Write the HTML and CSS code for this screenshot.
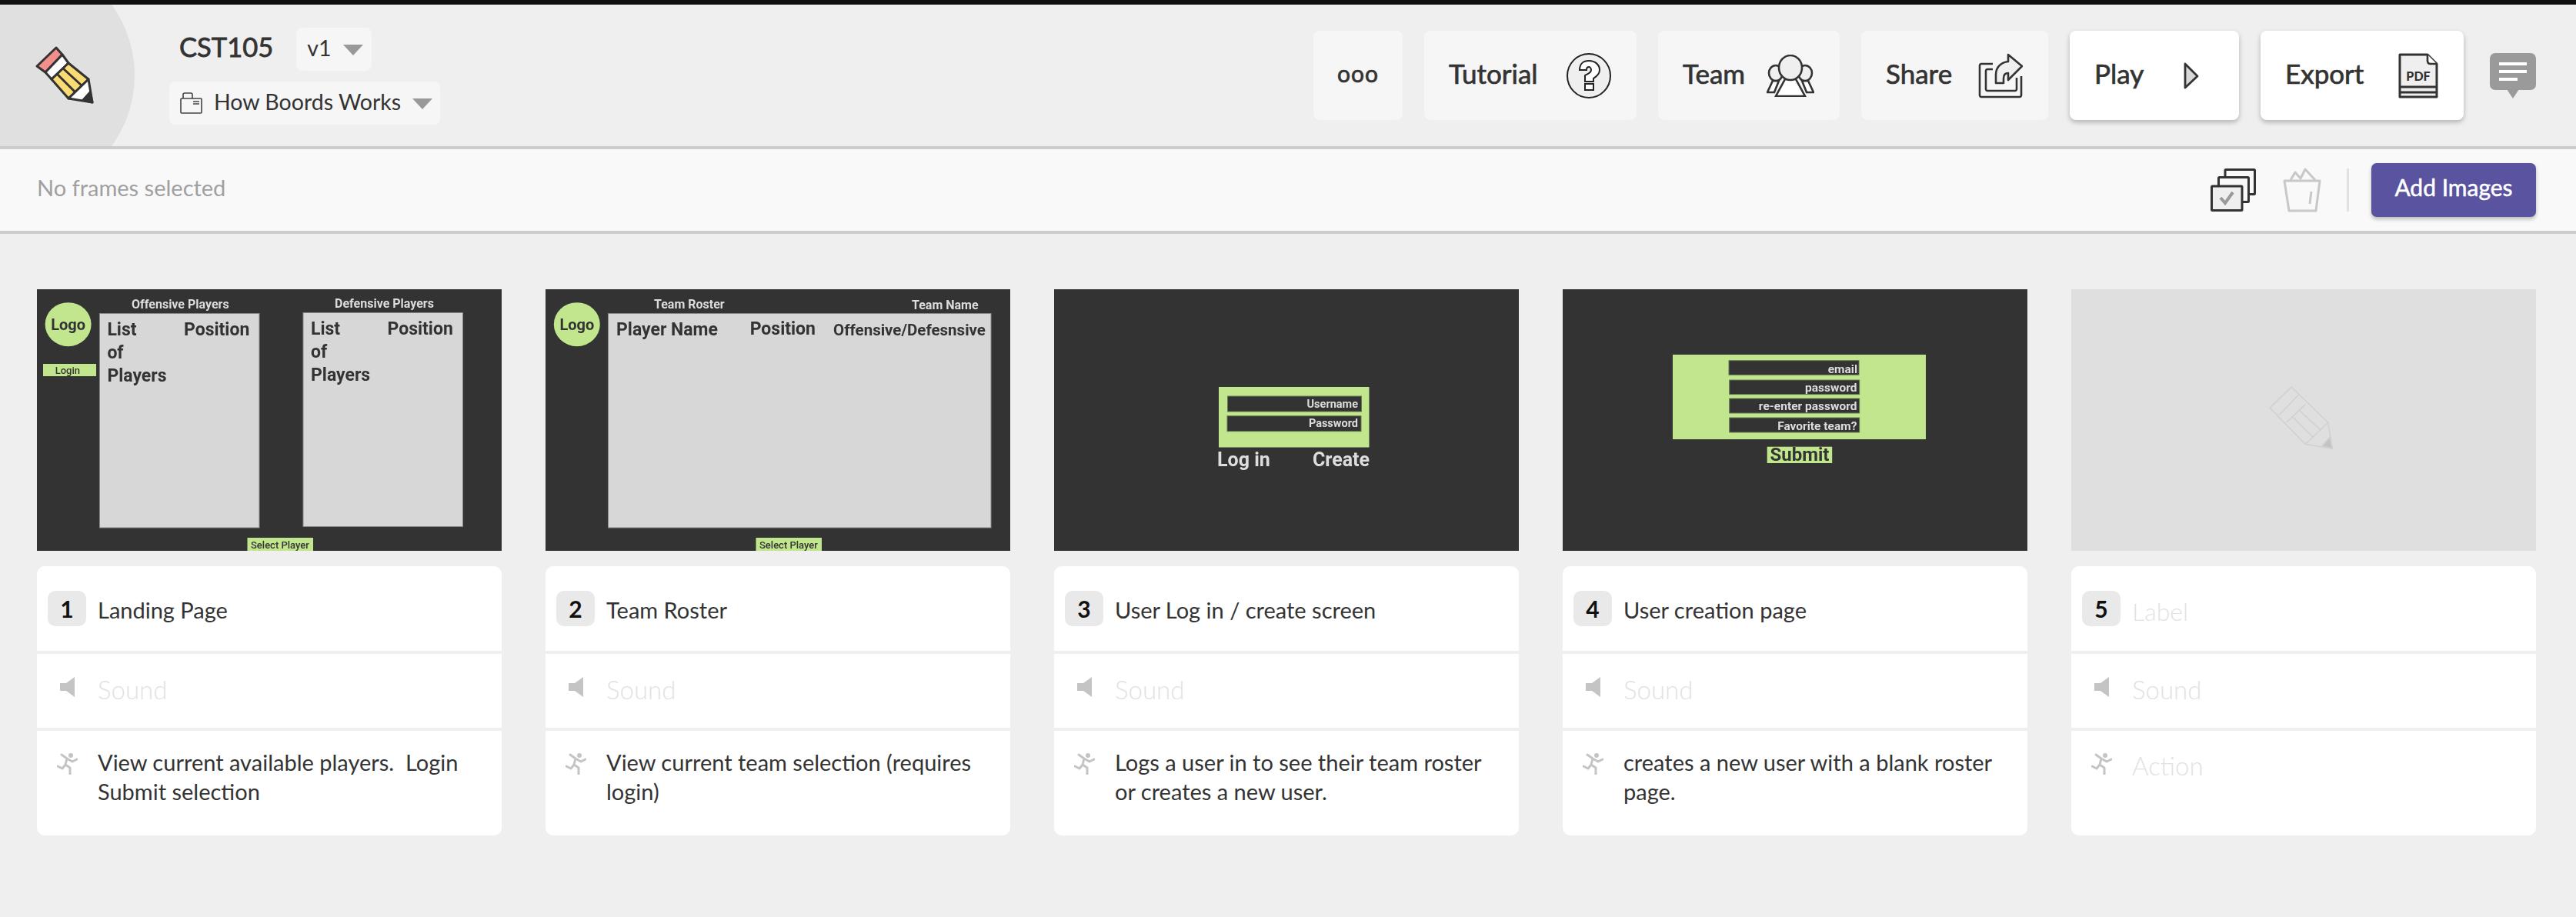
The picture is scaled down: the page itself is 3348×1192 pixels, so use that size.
FILE: index.html
```html
<!DOCTYPE html>
<html lang="en">
<head>
  <meta charset="UTF-8" />
  <title>CST105 - Boords</title>
  <link rel="stylesheet" href="styles.css">
</head>
<body>

<div class="top-line"></div>

<header class="app-header">
  <div class="header-left">
    <svg class="logo" width="175" height="184" viewBox="0 0 175 184">
      <circle cx="19" cy="92" r="156" fill="#e0e0e0"/>
      <g transform="translate(48 56)" stroke="#333" stroke-width="3" stroke-linejoin="round">
        <path d="M25 0 L33 9 L11 32 L0 24 Z" fill="#f28e8c"/>
        <path d="M33 9 L41 20 L19 41 L11 32 Z" fill="#fff"/>
        <path d="M41 20 L67 41 L41 66 L19 41 Z" fill="#fbdb74"/>
        <path d="M34 27 L58 49 M26 34 L50 58" fill="none"/>
        <path d="M67 41 L72 71 L41 66 Z" fill="#fff"/>
        <path d="M60 68 L69 58 L72 71 Z" fill="#333"/>
      </g>
    </svg>
    <div class="project">
      <div class="title-row">
        <span class="project-name">CST105</span>
        <div class="pill version-pill">
          <span class="pill-text">v1</span>
          <span class="caret"></span>
        </div>
      </div>
      <div class="pill folder-pill">
        <svg width="29" height="28" viewBox="0 0 29 28" fill="none" stroke="#444" stroke-width="1.6">
          <rect x="1" y="8" width="27" height="19" rx="1"/>
          <path d="M4 8 V3 Q4 1 6 1 H14 Q16 1 16 3 V8"/>
          <path d="M17 12 H25 M17 15 H25"/>
        </svg>
        <span class="pill-text">How Boords Works</span>
        <span class="caret"></span>
      </div>
    </div>
  </div>

  <div class="header-right">
    <button class="btn btn-more"><span class="btn-text">ooo</span></button>
    <button class="btn btn-tutorial">
      <span class="btn-text">Tutorial</span>
      <svg width="58" height="59" viewBox="0 0 58 59" stroke="#222" stroke-width="2">
        <ellipse cx="29" cy="29.5" rx="28" ry="28.5" fill="#efefef"/>
        <path d="M17 22 C17 14 22 10 29 10 C37 10 43 15 43 22 C43 28 38 31 35 33 L35 37 H24 L24 29 C27 27 32 26 32 22 C32 19 30 18 29 18 C27 18 26 20 26 22 Z" fill="#fff"/>
        <rect x="24" y="40" width="11" height="8" fill="#fff"/>
      </svg>
    </button>
    <button class="btn btn-team">
      <span class="btn-text">Team</span>
      <svg width="62" height="55" viewBox="0 0 62 55" stroke="#333" stroke-width="2.6" fill="#fff">
        <path d="M8 34 L16 34 L10 49 L1 49 Z M54 34 L46 34 L52 49 L61 49 Z"/>
        <ellipse cx="12" cy="24" rx="9" ry="10" fill="#efefef"/>
        <ellipse cx="50" cy="24" rx="9" ry="10" fill="#efefef"/>
        <path d="M24 32 L38 32 L50 54 L12 54 Z"/>
        <ellipse cx="31" cy="17" rx="15" ry="16" fill="#efefef"/>
      </svg>
    </button>
    <button class="btn btn-share">
      <span class="btn-text">Share</span>
      <svg width="58" height="59" viewBox="0 0 58 59" stroke="#333" stroke-width="2.6" fill="none" stroke-linejoin="round">
        <path d="M19 14 H4 C3 14 2 15 2 16 V55 C2 56 3 57 4 57 H54 C55 57 56 56 56 55 V30"/>
        <path d="M19 21 H12 C11 21 10 22 10 23 V47 C10 48 11 49 12 49 H48 C49 49 50 48 50 47 V32"/>
        <path d="M39 2 L57 17 L39 35 V26 C34 26 33 29 33 33 V39 H23 V28 C23 18 30 12 39 11 Z" fill="#efefef"/>
      </svg>
    </button>
    <button class="btn btn-raised btn-play">
      <span class="btn-text">Play</span>
      <svg width="20" height="35" viewBox="0 0 20 35">
        <path d="M2 2 L18 18 L2 33 Z" fill="#d8d8d8" stroke="#333" stroke-width="2.8" stroke-linejoin="round"/>
      </svg>
    </button>
    <button class="btn btn-raised btn-export">
      <span class="btn-text">Export</span>
      <svg width="52" height="59" viewBox="0 0 52 59">
        <path d="M2 2 H38 L50 14 V57 H2 Z" fill="#efefef" stroke="#333" stroke-width="3" stroke-linejoin="round"/>
        <path d="M38 2 V10 Q38 14 42 14 H50" fill="#fff" stroke="#333" stroke-width="2.6"/>
        <path d="M2 44 H50 M2 51 H50" stroke="#333" stroke-width="3"/>
        <text class="pdf-text" x="26" y="36" text-anchor="middle">PDF</text>
      </svg>
    </button>
    <svg class="comment-icon" width="60" height="59" viewBox="0 0 60 59">
      <rect width="60" height="48" rx="7" fill="#9a9a9a"/>
      <path d="M22 47 H38 L30 59 Z" fill="#9a9a9a"/>
      <path d="M12 12 H48 V16 H12 Z M12 22 H48 V26 H12 Z M12 32 H36 V36 H12 Z" fill="#fff"/>
    </svg>
  </div>
</header>

<div class="toolbar">
  <span class="no-frames">No frames selected</span>
  <div class="toolbar-right">
    <svg width="59" height="56" viewBox="0 0 59 56" stroke="#333" stroke-width="3" fill="#f9f9f9">
      <rect x="19" y="1.5" width="38.500" height="32" rx="1"/>
      <rect x="10.500" y="11.500" width="39" height="32" rx="1"/>
      <rect x="1.500" y="23" width="39.500" height="31.500" rx="1" fill="#efefef"/>
      <path d="M13 38 L19 45 L29 31" fill="none" stroke="#999" stroke-width="4"/>
    </svg>
    <svg class="trash-icon" width="50" height="58" viewBox="0 0 50 58" stroke="#c8c8c8" stroke-width="3" fill="none" stroke-linejoin="round">
      <path d="M2 17 H48 L43 56 H8 Z"/>
      <path d="M10 16 L16 6 L23 14 L29 2 L42 16"/>
      <path d="M37 31 L35 47"/>
    </svg>
    <div class="toolbar-divider"></div>
    <button class="add-images"><span class="add-images-text">Add Images</span></button>
  </div>
</div>

<main class="frames">

  <section class="frame">
    <svg class="thumb" viewBox="0 0 604 340">
      <rect width="604" height="340" fill="#333"/>
      <ellipse class="t-green" cx="40.600" cy="45.700" rx="30" ry="28.500"/>
      <text class="t-logo" x="40.600" y="53" text-anchor="middle">Logo</text>
      <rect class="t-green" x="8" y="97" width="69" height="16"/>
      <text class="t-small" x="23.700" y="110">Login</text>
      <text class="t-head" x="123" y="24.700">Offensive Players</text>
      <rect class="t-box" x="81.500" y="31.500" width="207.500" height="278.500"/>
      <text class="t-big" x="91.400" y="60">List</text>
      <text class="t-big" x="191" y="60">Position</text>
      <text class="t-big" x="91.400" y="90">of</text>
      <text class="t-big" x="91.400" y="120">Players</text>
      <text class="t-head" x="387" y="24">Defensive Players</text>
      <rect class="t-box" x="346" y="30.500" width="207.500" height="278"/>
      <text class="t-big" x="356" y="58.700">List</text>
      <text class="t-big" x="455.500" y="58.700">Position</text>
      <text class="t-big" x="356" y="88.700">of</text>
      <text class="t-big" x="356" y="118.700">Players</text>
      <rect class="t-green" x="273.500" y="323" width="85.500" height="17"/>
      <text class="t-small" x="278" y="337">Select Player</text>
    </svg>
    <div class="frame-card">
      <div class="row row-label"><span class="badge">1</span><span class="row-text">Landing Page</span></div>
      <div class="row row-sound"><span class="row-icon"><svg class="speaker" width="19" height="26" viewBox="0 0 19 26"><path d="M0 8 H8 L19 0 V26 L8 18 H0 Z"/></svg></span><span class="placeholder">Sound</span></div>
      <div class="row row-action"><span class="row-icon"><svg class="runner" width="27" height="29" viewBox="0 0 27 29"><circle cx="18" cy="4" r="3"/><path d="M6 3 L13 8 L20 12 L26 9 M13 8 L11 16 L17 20 L17 28 M11 16 L7 21 L1 18"/></svg></span><p>View current available players.&nbsp; Login Submit selection</p></div>
    </div>
  </section>

  <section class="frame">
    <svg class="thumb" viewBox="0 0 604 340">
      <rect width="604" height="340" fill="#333"/>
      <ellipse class="t-green" cx="40.800" cy="45.700" rx="30" ry="28.500"/>
      <text class="t-logo" x="40.800" y="53" text-anchor="middle">Logo</text>
      <text class="t-head" x="141" y="24.700">Team Roster</text>
      <text class="t-head" x="476" y="26">Team Name</text>
      <rect class="t-box" x="81.500" y="31.500" width="497.500" height="278.500"/>
      <text class="t-big" x="92" y="60">Player Name</text>
      <text class="t-big" x="265.700" y="59">Position</text>
      <text class="t-big t-narrow" x="374" y="60">Offensive/Defesnsive</text>
      <rect class="t-green" x="273.500" y="323" width="85.500" height="17"/>
      <text class="t-small" x="278" y="337">Select Player</text>
    </svg>
    <div class="frame-card">
      <div class="row row-label"><span class="badge">2</span><span class="row-text">Team Roster</span></div>
      <div class="row row-sound"><span class="row-icon"><svg class="speaker" width="19" height="26" viewBox="0 0 19 26"><path d="M0 8 H8 L19 0 V26 L8 18 H0 Z"/></svg></span><span class="placeholder">Sound</span></div>
      <div class="row row-action"><span class="row-icon"><svg class="runner" width="27" height="29" viewBox="0 0 27 29"><circle cx="18" cy="4" r="3"/><path d="M6 3 L13 8 L20 12 L26 9 M13 8 L11 16 L17 20 L17 28 M11 16 L7 21 L1 18"/></svg></span><p>View current team selection (requires login)</p></div>
    </div>
  </section>

  <section class="frame">
    <svg class="thumb" viewBox="0 0 604 340">
      <rect width="604" height="340" fill="#333"/>
      <rect class="t-green" x="214" y="127" width="195.500" height="78.500"/>
      <rect class="t-field" x="225.500" y="139" width="174" height="20"/>
      <text class="t-input" x="395" y="154" text-anchor="end">Username</text>
      <rect class="t-field" x="225" y="164.700" width="174" height="20"/>
      <text class="t-input" x="395" y="179" text-anchor="end">Password</text>
      <text class="t-link" x="212" y="230">Log in</text>
      <text class="t-link" x="410" y="230" text-anchor="end">Create</text>
    </svg>
    <div class="frame-card">
      <div class="row row-label"><span class="badge">3</span><span class="row-text">User Log in / create screen</span></div>
      <div class="row row-sound"><span class="row-icon"><svg class="speaker" width="19" height="26" viewBox="0 0 19 26"><path d="M0 8 H8 L19 0 V26 L8 18 H0 Z"/></svg></span><span class="placeholder">Sound</span></div>
      <div class="row row-action"><span class="row-icon"><svg class="runner" width="27" height="29" viewBox="0 0 27 29"><circle cx="18" cy="4" r="3"/><path d="M6 3 L13 8 L20 12 L26 9 M13 8 L11 16 L17 20 L17 28 M11 16 L7 21 L1 18"/></svg></span><p>Logs a user in to see their team roster or creates a new user.</p></div>
    </div>
  </section>

  <section class="frame">
    <svg class="thumb" viewBox="0 0 604 340">
      <rect width="604" height="340" fill="#333"/>
      <rect class="t-green" x="143" y="85" width="329" height="110"/>
      <rect class="t-field" x="216" y="92.700" width="169" height="18.600"/>
      <text class="t-form" x="383" y="109" text-anchor="end">email</text>
      <rect class="t-field" x="216.700" y="118" width="169" height="18.700"/>
      <text class="t-form" x="382.400" y="133" text-anchor="end">password</text>
      <rect class="t-field" x="216.700" y="142" width="169" height="19"/>
      <text class="t-form" x="382.400" y="157" text-anchor="end">re-enter password</text>
      <rect class="t-field" x="216.700" y="167" width="169" height="19"/>
      <text class="t-form" x="382.400" y="182.700" text-anchor="end">Favorite team?</text>
      <rect class="t-green" x="265.700" y="204.700" width="84.500" height="21.300"/>
      <text class="t-submit" x="308" y="223" text-anchor="middle">Submit</text>
    </svg>
    <div class="frame-card">
      <div class="row row-label"><span class="badge">4</span><span class="row-text">User creation page</span></div>
      <div class="row row-sound"><span class="row-icon"><svg class="speaker" width="19" height="26" viewBox="0 0 19 26"><path d="M0 8 H8 L19 0 V26 L8 18 H0 Z"/></svg></span><span class="placeholder">Sound</span></div>
      <div class="row row-action"><span class="row-icon"><svg class="runner" width="27" height="29" viewBox="0 0 27 29"><circle cx="18" cy="4" r="3"/><path d="M6 3 L13 8 L20 12 L26 9 M13 8 L11 16 L17 20 L17 28 M11 16 L7 21 L1 18"/></svg></span><p>creates a new user with a blank roster page.</p></div>
    </div>
  </section>

  <section class="frame">
    <svg class="thumb" viewBox="0 0 604 340">
      <rect width="604" height="340" fill="#dfdfdf"/>
      <g transform="translate(258 127) scale(1.130)" fill="none" stroke="#d0d0d0" stroke-width="1.300" stroke-linejoin="round">
        <path d="M25 0 L67 41 L72 71 L41 66 L0 24 Z"/>
        <path d="M33 9 L11 32 M41 20 L19 41 M34 27 L58 49 M26 34 L50 58 M67 41 L41 66"/>
        <path d="M60 68 L69 58 L72 71 Z" fill="#c4c4c4"/>
      </g>
    </svg>
    <div class="frame-card">
      <div class="row row-label"><span class="badge">5</span><span class="row-text placeholder">Label</span></div>
      <div class="row row-sound"><span class="row-icon"><svg class="speaker" width="19" height="26" viewBox="0 0 19 26"><path d="M0 8 H8 L19 0 V26 L8 18 H0 Z"/></svg></span><span class="placeholder">Sound</span></div>
      <div class="row row-action"><span class="row-icon"><svg class="runner" width="27" height="29" viewBox="0 0 27 29"><circle cx="18" cy="4" r="3"/><path d="M6 3 L13 8 L20 12 L26 9 M13 8 L11 16 L17 20 L17 28 M11 16 L7 21 L1 18"/></svg></span><p class="placeholder">Action</p></div>
    </div>
  </section>

</main>

</body>
</html>
```

FILE: styles.css
```css
* {
  box-sizing: border-box;
}

body {
  margin: 0;
  background-color: #efefef;
  font-family: 'Lato', sans-serif;
  color: #333;
  font-size: 29px;
}

.top-line {
  height: 6px;
  background-color: #111;
}

/* header */

.app-header {
  display: flex;
  justify-content: space-between;
  align-items: center;
  height: 188px;
  padding-right: 52px;
  border-bottom: 4px solid #ccc;
}

.header-left {
  display: flex;
  align-self: flex-start;
}

.logo {
  display: block;
}

.project {
  margin-left: 45px;
  padding-top: 30px;
}

.title-row {
  display: flex;
  align-items: center;
  padding-left: 13px;
  gap: 30px;
  margin-bottom: 14px;
}

.project-name {
  font-size: 34.500px;
  font-weight: 400;
  -webkit-text-stroke: 0.8px #333;
  margin-top: -8px;
}

.pill {
  display: flex;
  align-items: center;
  height: 56px;
  background-color: #f6f6f6;
  border-radius: 8px;
  font-size: 28.500px;
}

.pill-text {
  margin-top: -4px;
}

.version-pill {
  width: 98px;
  padding-left: 14px;
  gap: 16px;
}

.folder-pill {
  width: 352px;
  padding-left: 14px;
  gap: 15px;
}

.caret {
  width: 0;
  height: 0;
  border-left: 13px solid transparent;
  border-right: 13px solid transparent;
  border-top: 14px solid #999;
  margin-top: 2px;
}

.header-right {
  display: flex;
  align-items: center;
  gap: 28px;
}

.btn {
  display: flex;
  align-items: center;
  justify-content: space-between;
  height: 116px;
  padding: 0 33px 0 32px;
  background-color: #f6f6f6;
  border: none;
  border-radius: 8px;
  font-family: inherit;
  font-size: 35px;
  font-weight: 400;
  color: #333;
}

.btn-text {
  margin-top: -6px;
  -webkit-text-stroke: 0.7px #333;
}

.btn-raised {
  background-color: #fff;
  box-shadow: 0 3px 6px rgba(0, 0, 0, 0.25);
}

.btn-more {
  width: 116px;
  justify-content: center;
  padding: 0;
  font-size: 30px;
  letter-spacing: 1px;
}

.btn-tutorial { width: 276px; }
.btn-team { width: 236px; }
.btn-share { width: 243px; }
.btn-play { width: 220px; padding-right: 52px; }
.btn-export { width: 264px; }

.pdf-text {
  font-size: 16px;
  font-weight: 900;
  fill: #333;
}

.comment-icon {
  margin-left: 6px;
}

/* toolbar */

.toolbar {
  display: flex;
  justify-content: space-between;
  align-items: center;
  height: 110px;
  padding: 0 52px 0 48px;
  background-color: #f9f9f9;
  border-bottom: 4px solid #ccc;
}

.no-frames {
  color: #a0a0a0;
  margin-top: -7px;
}

.toolbar-right {
  display: flex;
  align-items: center;
}

.trash-icon {
  margin-left: 35px;
}

.toolbar-divider {
  width: 3px;
  height: 56px;
  margin: 0 29px 0 33px;
  background-color: #e2e2e2;
}

.add-images {
  width: 214px;
  height: 70px;
  background-color: #5a539f;
  color: #fff;
  border: none;
  border-radius: 7px;
  font-family: inherit;
  font-size: 30px;
  font-weight: 400;
  box-shadow: 0 3px 5px rgba(0, 0, 0, 0.25);
}

.add-images-text {
  position: relative;
  top: -4px;
  -webkit-text-stroke: 0.5px #fff;
}

/* frames */

.frames {
  display: grid;
  grid-template-columns: repeat(5, 604px);
  column-gap: 57px;
  padding: 72px 0 0 48px;
}

.thumb {
  display: block;
  width: 604px;
  height: 340px;
  margin-bottom: 20px;
  filter: blur(0.4px);
}

.frame-card {
  display: flex;
  flex-direction: column;
  gap: 4px;
  border-radius: 10px;
  overflow: hidden;
}

.row {
  display: flex;
  background-color: #fff;
  padding-left: 14px;
  gap: 15px;
}

.row-label {
  height: 110px;
  align-items: center;
}

.row-text {
  margin-top: 2px;
}

.row-sound {
  height: 96px;
  align-items: center;
}

.row-action {
  height: 136px;
  padding-top: 22px;
}

.row-action p {
  margin: 0;
  width: 490px;
  line-height: 38px;
}

.badge {
  display: flex;
  justify-content: center;
  align-items: center;
  width: 50px;
  height: 46px;
  background-color: #e9e9e9;
  border-radius: 10px;
  font-size: 30px;
  font-weight: 700;
  color: #111;
}

.row-icon {
  display: flex;
  justify-content: center;
  width: 50px;
}

.row-sound .row-icon {
  margin-top: -10px;
}

.row-action .row-icon {
  align-self: flex-start;
}

.placeholder {
  color: #e2e2e2;
  font-size: 33px;
  font-weight: 300;
}

.row-sound .placeholder {
  margin-top: -4px;
}

.row-action .placeholder {
  margin-top: 4px;
}

.row-label .placeholder {
  font-size: 32px;
  margin-top: 6px;
}

.speaker {
  fill: #c4c4c4;
}

.runner {
  margin-top: 6px;
  fill: #c4c4c4;
}

.runner path {
  fill: none;
  stroke: #c4c4c4;
  stroke-width: 3;
  stroke-linecap: round;
  stroke-linejoin: round;
}

/* pieces of the uploaded frame pictures */

.thumb text {
  font-family: 'Roboto', sans-serif;
}

.t-green {
  fill: #c1e68d;
}

.t-box {
  fill: #d7d7d7;
  stroke: #888;
  stroke-width: 1;
}

.t-field {
  fill: #333;
  stroke: #667a55;
  stroke-width: 1;
}

.t-logo {
  font-size: 20px;
  font-weight: 700;
  fill: #333;
}

.t-small {
  font-size: 13px;
  font-weight: 500;
  fill: #333;
}

.t-head {
  font-size: 16px;
  font-weight: 700;
  fill: #ddd;
}

.t-big {
  font-size: 23px;
  font-weight: 700;
  fill: #333;
}

.t-narrow {
  font-size: 20.500px;
}

.t-input {
  font-size: 14.500px;
  font-weight: 700;
  fill: #ddd;
}

.t-form {
  font-size: 15.500px;
  font-weight: 700;
  fill: #ddd;
}

.t-link {
  font-size: 25px;
  font-weight: 700;
  fill: #ddd;
}

.t-submit {
  font-size: 24px;
  font-weight: 700;
  fill: #333;
}
```
